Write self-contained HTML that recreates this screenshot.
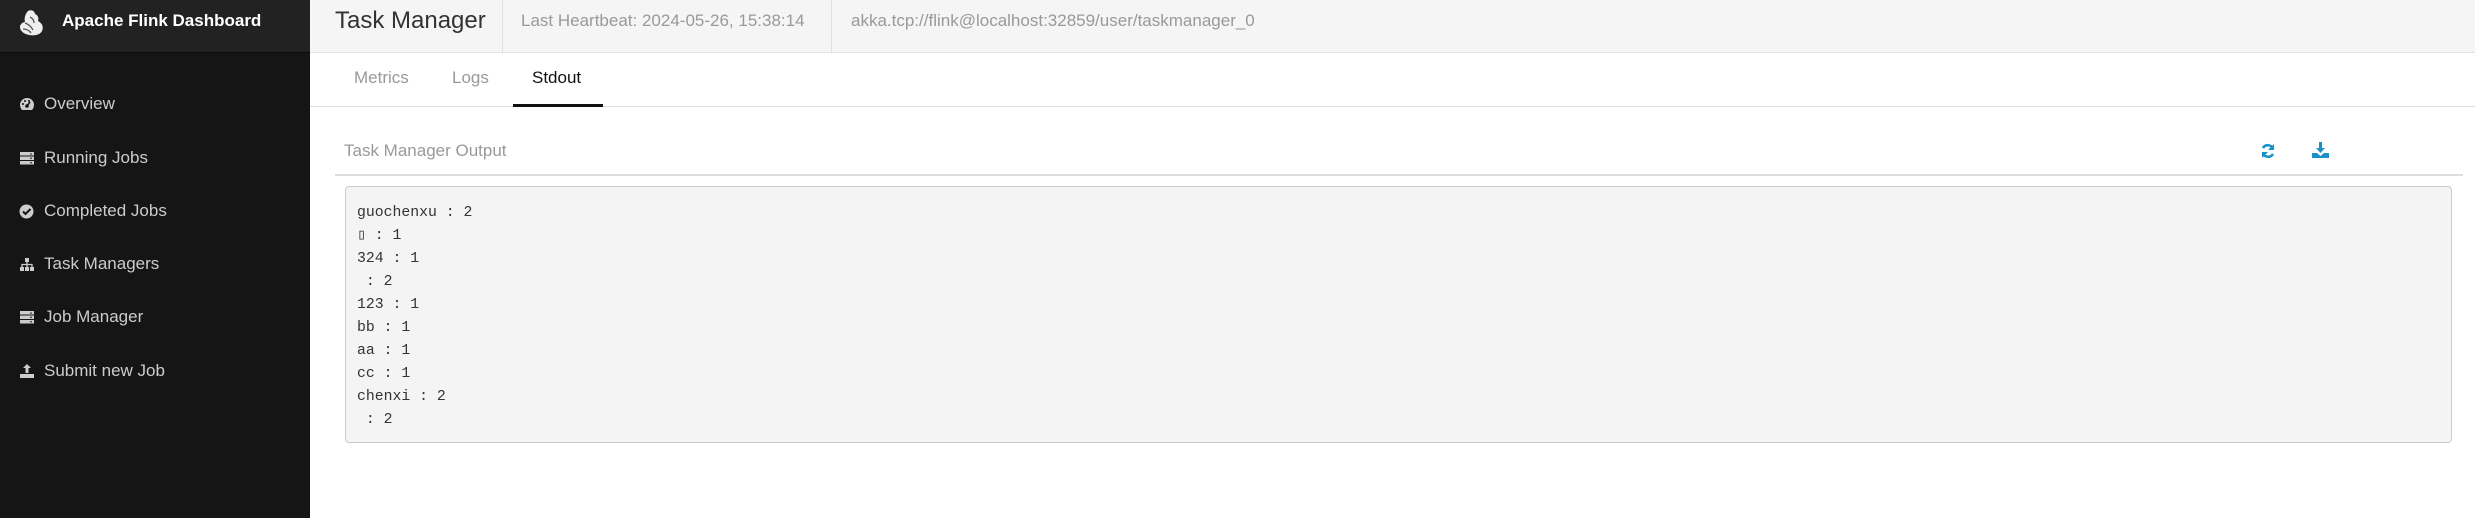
<!DOCTYPE html>
<html><head><meta charset="utf-8"><style>
*{margin:0;padding:0;box-sizing:border-box}
body{width:2475px;height:518px;background:#fff;font-family:"Liberation Sans",sans-serif;position:relative;overflow:hidden}
.sb{position:absolute;left:0;top:0;width:310px;height:518px;background:#151515}
.sbh{position:absolute;left:0;top:0;width:310px;height:53px;background:#222;border-bottom:1px solid #0a0a0a}
.brand{position:absolute;left:62px;top:10px;color:#fff;font-weight:bold;font-size:17px;line-height:22px}
.mi{position:absolute;left:19px;color:#ccc;font-size:17px;line-height:22px}
.mi svg{position:absolute;left:0;top:4px}
.mi span{position:absolute;left:25px;white-space:nowrap}
.hd{position:absolute;left:310px;top:0;right:0;height:53px;background:#f5f5f5;border-bottom:1px solid #e3e3e3}
.t{position:absolute;white-space:nowrap}
.vd{position:absolute;top:0;width:1px;height:53px;background:#e0e0e0}
.tabs{position:absolute;left:310px;right:0;top:53px;height:54px;border-bottom:1px solid #ddd}
pre{position:absolute;left:345px;top:186px;width:2107px;height:257px;background:#f4f4f4;border:1px solid #ccc;border-radius:4px;padding:15px 11px;font-family:"Liberation Mono","DejaVu Sans Mono",monospace;font-size:14.8px;line-height:23px;color:#333}
</style></head><body>
<div class="sb"></div>
<div class="sbh"></div>
<svg style="position:absolute;left:16px;top:9px" width="30" height="27" viewBox="0 0 30 27"><path d="M12 2c3-2 7 0 7 3 3 1 4 4 3 7 4 2 6 6 4 10-2 4-8 5-13 4-5-1-9-4-9-8 0-3 3-5 5-5-1-3 0-8 3-11z" fill="#eee"/><path d="M9 14c3 1 6 3 8 7M14 8c2 1 4 3 4 6M7 20c3 0 6 1 8 4" stroke="#555" fill="none" stroke-width="1.3"/></svg>
<div class="brand">Apache Flink Dashboard</div>

<div class="mi" style="top:93px"><svg width="16" height="14" viewBox="0 0 16 14"><path d="M8 1a7 7 0 0 0-7 7c0 2 1 4 2 5h10c1-1 2-3 2-5a7 7 0 0 0-7-7z" fill="#ccc"/><circle cx="8" cy="9" r="1.8" fill="#151515"/><path d="M8 9l3-4" stroke="#151515" stroke-width="1.5"/><circle cx="4" cy="7" r="1" fill="#151515"/><circle cx="6" cy="4" r="1" fill="#151515"/><circle cx="10" cy="4" r="1" fill="#151515"/></svg><span>Overview</span></div>
<div class="mi" style="top:147px"><svg width="16" height="14" viewBox="0 0 16 14"><rect x="1" y="1" width="14" height="3.5" fill="#ccc"/><rect x="1" y="5.5" width="14" height="3.5" fill="#ccc"/><rect x="1" y="10" width="14" height="3.5" fill="#ccc"/><circle cx="12" cy="3" r=".8" fill="#151515"/><circle cx="12" cy="7.3" r=".8" fill="#151515"/><circle cx="12" cy="11.7" r=".8" fill="#151515"/></svg><span>Running Jobs</span></div>
<div class="mi" style="top:200px"><svg width="16" height="15" viewBox="0 0 16 15"><circle cx="7.5" cy="7.5" r="7" fill="#ccc"/><path d="M4 7.5l2.5 2.5 5-5" stroke="#151515" stroke-width="2" fill="none"/></svg><span>Completed Jobs</span></div>
<div class="mi" style="top:253px"><svg width="16" height="15" viewBox="0 0 16 15"><rect x="6" y="1" width="4" height="4" fill="#ccc"/><rect x="1" y="10" width="4" height="4" fill="#ccc"/><rect x="6" y="10" width="4" height="4" fill="#ccc"/><rect x="11" y="10" width="4" height="4" fill="#ccc"/><path d="M8 5v5M3 10V7.5h10V10" stroke="#ccc" stroke-width="1.3" fill="none"/></svg><span>Task Managers</span></div>
<div class="mi" style="top:306px"><svg width="16" height="14" viewBox="0 0 16 14"><rect x="1" y="1" width="14" height="3.5" fill="#ccc"/><rect x="1" y="5.5" width="14" height="3.5" fill="#ccc"/><rect x="1" y="10" width="14" height="3.5" fill="#ccc"/><circle cx="12" cy="3" r=".8" fill="#151515"/><circle cx="12" cy="7.3" r=".8" fill="#151515"/><circle cx="12" cy="11.7" r=".8" fill="#151515"/></svg><span>Job Manager</span></div>
<div class="mi" style="top:360px"><svg width="16" height="15" viewBox="0 0 16 15"><path d="M8 0l4 4H9.5v5h-3V4H4z" fill="#ccc"/><rect x="1" y="10" width="14" height="4" fill="#ccc"/></svg><span>Submit new Job</span></div>

<div class="hd"></div>
<div class="t" style="left:335px;top:7px;font-size:24px;color:#333">Task Manager</div>
<div class="vd" style="left:502px"></div>
<div class="t" style="left:521px;top:11px;font-size:17px;color:#999">Last Heartbeat: 2024-05-26, 15:38:14</div>
<div class="vd" style="left:831px"></div>
<div class="t" style="left:851px;top:11px;font-size:17px;color:#999">akka.tcp://flink@localhost:32859/user/taskmanager_0</div>

<div class="tabs"></div>
<div class="t" style="left:354px;top:68px;font-size:17px;color:#999">Metrics</div>
<div class="t" style="left:452px;top:68px;font-size:17px;color:#999">Logs</div>
<div class="t" style="left:532px;top:68px;font-size:17px;color:#111">Stdout</div>
<div style="position:absolute;left:513px;top:104px;width:90px;height:3px;background:#111"></div>

<div class="t" style="left:344px;top:141px;font-size:17px;color:#999">Task Manager Output</div>
<svg style="position:absolute;left:2260px;top:143px" width="16" height="16" viewBox="0 0 16 16"><path d="M13 6A5.5 5.5 0 0 0 3 5" stroke="#1a8fc9" stroke-width="2.6" fill="none"/><path d="M14 1v6H8z" fill="#1a8fc9"/><path d="M3 10a5.5 5.5 0 0 0 10 1" stroke="#1a8fc9" stroke-width="2.6" fill="none"/><path d="M2 15V9h6z" fill="#1a8fc9"/></svg>
<svg style="position:absolute;left:2312px;top:142px" width="17" height="17" viewBox="0 0 17 17"><path d="M7 0h3v6h3l-4.5 5L4 6h3z" fill="#1a8fc9"/><path d="M0 11h5l3.5 3 3.5-3h5v5H0z" fill="#1a8fc9"/></svg>
<div style="position:absolute;left:335px;top:174px;width:2128px;height:2px;background:#ddd"></div>

<pre>guochenxu : 2
&#9647; : 1
324 : 1
 : 2
123 : 1
bb : 1
aa : 1
cc : 1
chenxi : 2
 : 2</pre>
</body></html>
